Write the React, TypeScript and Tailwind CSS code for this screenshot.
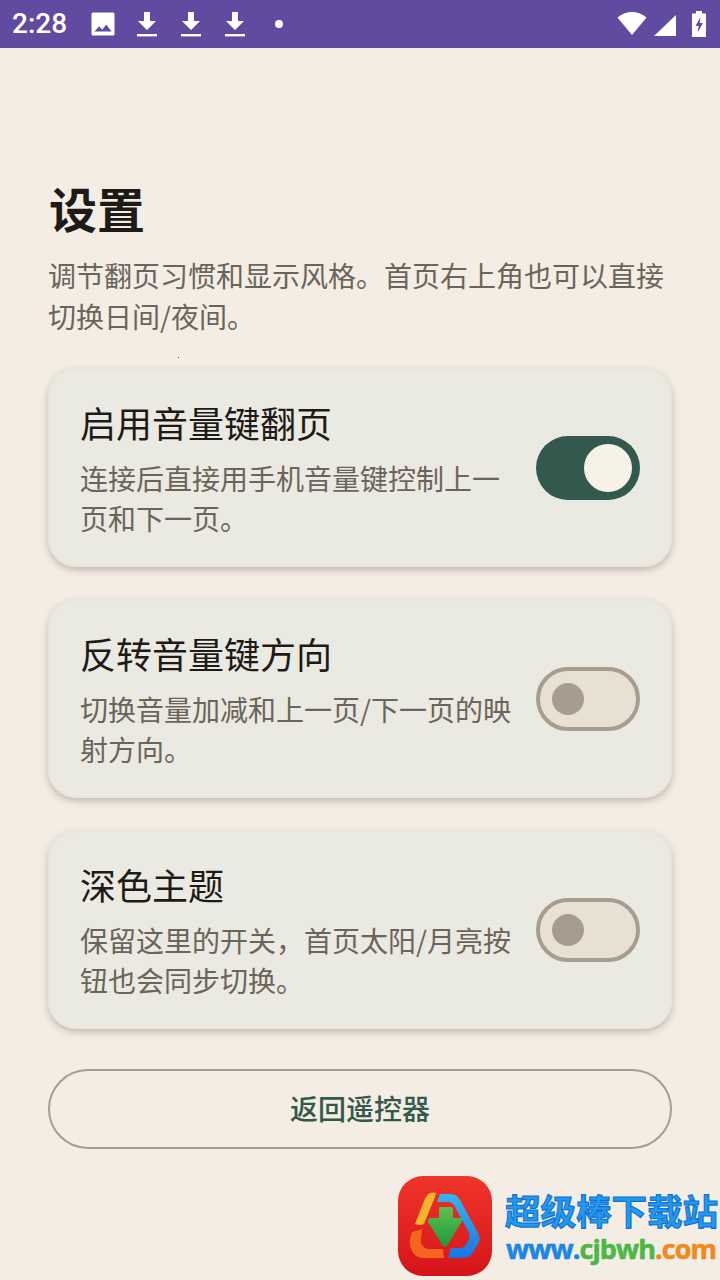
import React from "react";

const font = { fontFamily: '"Noto Sans CJK SC", Roboto, sans-serif' };

function Download() {
  return (
    <svg width="24" height="28" viewBox="0 0 24 28" fill="white">
      <path d="M9 2h6v9h6l-9 9-9-9h6z" />
      <rect x="2" y="24" width="20" height="2.4" />
    </svg>
  );
}

function StatusBar() {
  return (
    <div className="flex h-12 shrink-0 items-center bg-[#614ba0] pl-3 pr-[14px] text-white">
      <span className="w-[55px] text-[28px] leading-none font-medium" style={{ fontFamily: "Roboto, sans-serif" }}>
        2:28
      </span>
      <svg className="ml-[24px]" width="24" height="24" viewBox="0 0 24 24" fill="white">
        <path fillRule="evenodd" d="M2 0.5h20a1.500 1.500 0 0 1 1.500 1.500v20a1.500 1.500 0 0 1-1.500 1.500H2A1.500 1.500 0 0 1 0.500 22V2A1.500 1.500 0 0 1 2 0.5zM3.500 19.500h17l-5.200-7-4.200 5.300-2.900-3.500z" />
      </svg>
      <span className="ml-[20px] flex gap-5">
        <Download />
        <Download />
        <Download />
      </span>
      <span className="ml-[28px] h-2 w-2 rounded-full bg-white" />
      <span className="ml-auto flex items-center gap-[7px]">
        <svg width="30" height="24" viewBox="0 0 30 24" fill="white">
          <path d="M0.500 5.500C4.500 2 9.500 0 15 0s10.500 2 14.500 5.500L15 23z" />
        </svg>
        <svg width="22" height="24" viewBox="0 0 22 24" fill="white">
          <path d="M22 3v21H0z" />
        </svg>
        <svg className="ml-[9px]" width="14" height="26" viewBox="0 0 14 26" fill="white">
          <path fillRule="evenodd" d="M4 0h6v2.500h4V26H0V2.500h4zM8.500 6L3.500 15h3.200l-1 6.500L11 12H7.600z" />
        </svg>
      </span>
    </div>
  );
}

function Toggle({ on }: { on: boolean }) {
  return on ? (
    <div className="flex h-16 w-[104px] shrink-0 items-center justify-end rounded-full bg-[#33594d] pr-2">
      <div className="h-12 w-12 rounded-full bg-[#f7f2e8]" />
    </div>
  ) : (
    <div className="flex h-16 w-[104px] shrink-0 items-center rounded-full border-4 border-[#a69d8f] bg-[#e8e0d2] pl-3">
      <div className="h-8 w-8 rounded-full bg-[#a69d8f]" />
    </div>
  );
}

function Card({ title, lines, on }: { title: string; lines: string[]; on: boolean }) {
  return (
    <div className="flex h-[199px] items-center rounded-[28px] border-2 border-[#ebe6dd] bg-[#eae9e2] pl-[30px] pr-[30px] shadow-[0_3px_7px_rgba(60,50,35,0.28)]">
      <div className="min-w-0 flex-1 pt-[2px]">
        <div className="text-[36px] leading-[44px] text-[#1e1b16] whitespace-nowrap">{title}</div>
        <div className="mt-[14px] text-[28px] leading-[40px] text-[#6a645b]">
          {lines.map((l) => (
            <div key={l} className="whitespace-nowrap">{l}</div>
          ))}
        </div>
      </div>
      <Toggle on={on} />
    </div>
  );
}

function Logo() {
  return (
    <svg width="96" height="102" viewBox="0 0 96 102">
      <defs>
        <linearGradient id="lr" x1="0" y1="0" x2="0" y2="1">
          <stop offset="0" stopColor="#f0352a" />
          <stop offset="1" stopColor="#d5141a" />
        </linearGradient>
        <linearGradient id="lb" x1="0" y1="0" x2="0" y2="1">
          <stop offset="0" stopColor="#35b4f2" />
          <stop offset="1" stopColor="#1a74e0" />
        </linearGradient>
        <linearGradient id="lg" x1="0" y1="0" x2="0" y2="1">
          <stop offset="0" stopColor="#5cc04e" />
          <stop offset="1" stopColor="#1f9a3c" />
        </linearGradient>
      </defs>
      <rect x="1" y="1" width="94" height="100" rx="25" fill="url(#lr)" />
      <path d="M43 19h11q6 0 9 6l18 33q3 6 0 11l-6 10q-3 4-9 4H51l3-10h10q3 0 5-3l3-6q1-3 0-6L57 30q-2-3-5-3H40z" fill="url(#lb)" />
      <path d="M33 18q4-1 6 0l-1 4-11 27q-4 2-9 0l9-23q3-7 6-8z" fill="#f7b32b" />
      <path d="M15 57l10-3q0 5-1 9t1 7q2 3 6 4h15l1 9H25q-7-1-10-7t-2-12z" fill="#f4661f" />
      <path d="M43 32h11q2 0 2 2v9h8q2 1 1 3L50 71q-2 2-4 0L31 47q-1-3 2-4h9v-9q0-2 1-2z" fill="url(#lg)" />
    </svg>
  );
}

export default function App() {
  return (
    <div className="relative flex h-[1280px] w-[720px] flex-col overflow-hidden bg-[#f4ede4]" style={font}>
      <StatusBar />
      <main className="flex flex-col px-12 pt-[126px]">
        <h1 className="pl-px text-[48px] leading-[66px] font-bold text-[#1e1b16]">设置</h1>
        <p className="mt-[15px] text-[28px] leading-[41px] text-[#6a645b]">
          调节翻页习惯和显示风格。首页右上角也可以直接
          <br />
          切换日间/夜间。
        </p>
        <div className="mt-[31px] flex flex-col gap-8">
          <Card title="启用音量键翻页" lines={["连接后直接用手机音量键控制上一", "页和下一页。"]} on />
          <Card title="反转音量键方向" lines={["切换音量加减和上一页/下一页的映", "射方向。"]} on={false} />
          <Card title="深色主题" lines={["保留这里的开关，首页太阳/月亮按", "钮也会同步切换。"]} on={false} />
        </div>
        <button className="mt-[40px] flex h-[80px] items-center justify-center rounded-full border-2 border-[#a69d8f] pb-[2px] text-[28px] font-medium text-[#33594d]">
          返回遥控器
        </button>
      </main>
      <div className="absolute left-[178px] top-[357px] h-px w-px bg-[#4a3a30]" />
      <div className="absolute left-[397px] top-[1175px] flex items-center">
        <Logo />
        <div className="ml-[12px] flex flex-col font-bold">
          <span className="text-[35.500px] leading-[44px] whitespace-nowrap text-[#1f9cf0] [-webkit-text-stroke:1.200px_#1272d4]">超级棒下载站</span>
          <span className="ml-px mt-[1px] w-[211px] text-[27px] leading-[32px] tracking-[-0.9px] whitespace-nowrap text-[#1d86e4] [-webkit-text-stroke:0.6px_#1d86e4]" style={{ fontFamily: '"Open Sans", sans-serif' }}>
            www.<span className="text-[#4cb649] [-webkit-text-stroke:0.6px_#4cb649]">cjbwh</span><span className="text-[#ef8a1d] [-webkit-text-stroke:0.6px_#ef8a1d]">.com</span>
          </span>
        </div>
      </div>
    </div>
  );
}
